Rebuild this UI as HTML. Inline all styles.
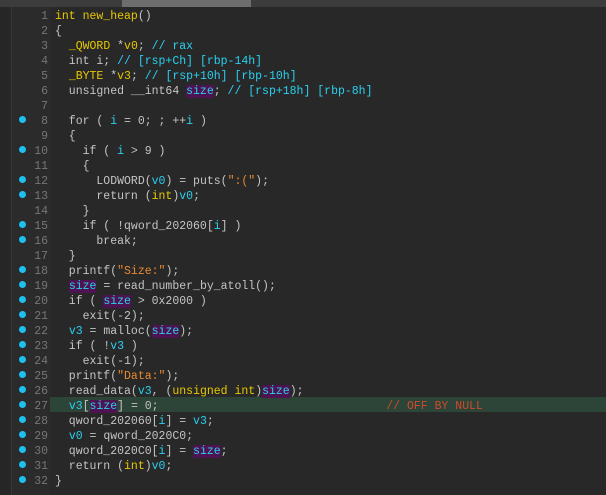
<!DOCTYPE html>
<html><head><style>
*{margin:0;padding:0;box-sizing:border-box}
body{width:606px;height:495px;background:#282828;position:relative;overflow:hidden;font-family:"Liberation Mono",monospace;font-size:11.5px}
#top{position:absolute;left:0;top:0;width:606px;height:7px;background:#3c3c3c}
#tab{position:absolute;left:122px;top:0;width:129px;height:7px;background:#6e6e6e}
#left{position:absolute;left:0;top:7px;width:12px;height:488px;background:#262626;border-right:1px solid #3a3a3a}
#gut{position:absolute;left:13px;top:7px;width:37px;height:488px;background:#2b2b2b}
.hl{position:absolute;left:50px;top:397px;width:556px;height:15px;background:#2d4438}
.ln{position:absolute;left:13px;width:35px;height:15px;line-height:15px;text-align:right;color:#767676}
.dot{position:absolute;left:19px;width:7px;height:7px;border-radius:50%;background:#1ec0f0}
.c{position:absolute;left:55px;height:15px;line-height:15px;color:#c4c4c4;white-space:pre}
.y{color:#e8c800}.v{color:#2ad0f0}.s{color:#e88a30}.cm{color:#2ad0f0}.r{color:#d04a2a}
.p{background:#4e1452;color:#2ad0f0}
</style></head><body>
<div id="top"></div><div id="tab"></div>
<div id="left"></div><div id="gut"></div>
<div class="hl"></div>
<div class="ln" style="top:9px">1</div><div class="c" style="top:9px"><span class="y">int new_heap</span>()</div>
<div class="ln" style="top:24px">2</div><div class="c" style="top:24px">{</div>
<div class="ln" style="top:39px">3</div><div class="c" style="top:39px">  <span class="y">_QWORD</span> *<span class="y">v0</span>; <span class="cm">// rax</span></div>
<div class="ln" style="top:54px">4</div><div class="c" style="top:54px">  int i; <span class="cm">// [rsp+Ch] [rbp-14h]</span></div>
<div class="ln" style="top:69px">5</div><div class="c" style="top:69px">  <span class="y">_BYTE</span> *<span class="y">v3</span>; <span class="cm">// [rsp+10h] [rbp-10h]</span></div>
<div class="ln" style="top:84px">6</div><div class="c" style="top:84px">  unsigned __int64 <span class="p">size</span>; <span class="cm">// [rsp+18h] [rbp-8h]</span></div>
<div class="ln" style="top:99px">7</div>
<div class="dot" style="top:116px"></div><div class="ln" style="top:114px">8</div><div class="c" style="top:114px">  for ( <span class="v">i</span> = 0; ; ++<span class="v">i</span> )</div>
<div class="ln" style="top:129px">9</div><div class="c" style="top:129px">  {</div>
<div class="dot" style="top:146px"></div><div class="ln" style="top:144px">10</div><div class="c" style="top:144px">    if ( <span class="v">i</span> &gt; 9 )</div>
<div class="ln" style="top:159px">11</div><div class="c" style="top:159px">    {</div>
<div class="dot" style="top:176px"></div><div class="ln" style="top:174px">12</div><div class="c" style="top:174px">      LODWORD(<span class="v">v0</span>) = puts(<span class="s">":("</span>);</div>
<div class="dot" style="top:191px"></div><div class="ln" style="top:189px">13</div><div class="c" style="top:189px">      return (<span class="y">int</span>)<span class="v">v0</span>;</div>
<div class="ln" style="top:204px">14</div><div class="c" style="top:204px">    }</div>
<div class="dot" style="top:221px"></div><div class="ln" style="top:219px">15</div><div class="c" style="top:219px">    if ( !qword_202060[<span class="v">i</span>] )</div>
<div class="dot" style="top:236px"></div><div class="ln" style="top:234px">16</div><div class="c" style="top:234px">      break;</div>
<div class="ln" style="top:249px">17</div><div class="c" style="top:249px">  }</div>
<div class="dot" style="top:266px"></div><div class="ln" style="top:264px">18</div><div class="c" style="top:264px">  printf(<span class="s">"Size:"</span>);</div>
<div class="dot" style="top:281px"></div><div class="ln" style="top:279px">19</div><div class="c" style="top:279px">  <span class="p">size</span> = read_number_by_atoll();</div>
<div class="dot" style="top:296px"></div><div class="ln" style="top:294px">20</div><div class="c" style="top:294px">  if ( <span class="p">size</span> &gt; 0x2000 )</div>
<div class="dot" style="top:311px"></div><div class="ln" style="top:309px">21</div><div class="c" style="top:309px">    exit(-2);</div>
<div class="dot" style="top:326px"></div><div class="ln" style="top:324px">22</div><div class="c" style="top:324px">  <span class="v">v3</span> = malloc(<span class="p">size</span>);</div>
<div class="dot" style="top:341px"></div><div class="ln" style="top:339px">23</div><div class="c" style="top:339px">  if ( !<span class="v">v3</span> )</div>
<div class="dot" style="top:356px"></div><div class="ln" style="top:354px">24</div><div class="c" style="top:354px">    exit(-1);</div>
<div class="dot" style="top:371px"></div><div class="ln" style="top:369px">25</div><div class="c" style="top:369px">  printf(<span class="s">"Data:"</span>);</div>
<div class="dot" style="top:386px"></div><div class="ln" style="top:384px">26</div><div class="c" style="top:384px">  read_data(<span class="v">v3</span>, (<span class="y">unsigned int</span>)<span class="p">size</span>);</div>
<div class="dot" style="top:401px"></div><div class="ln" style="top:399px">27</div><div class="c" style="top:399px">  <span class="v">v3</span>[<span class="p">size</span>] = 0;                                 <span class="r">// OFF BY NULL</span></div>
<div class="dot" style="top:416px"></div><div class="ln" style="top:414px">28</div><div class="c" style="top:414px">  qword_202060[<span class="v">i</span>] = <span class="v">v3</span>;</div>
<div class="dot" style="top:431px"></div><div class="ln" style="top:429px">29</div><div class="c" style="top:429px">  <span class="v">v0</span> = qword_2020C0;</div>
<div class="dot" style="top:446px"></div><div class="ln" style="top:444px">30</div><div class="c" style="top:444px">  qword_2020C0[<span class="v">i</span>] = <span class="p">size</span>;</div>
<div class="dot" style="top:461px"></div><div class="ln" style="top:459px">31</div><div class="c" style="top:459px">  return (<span class="y">int</span>)<span class="v">v0</span>;</div>
<div class="dot" style="top:476px"></div><div class="ln" style="top:474px">32</div><div class="c" style="top:474px">}</div>
</body></html>
